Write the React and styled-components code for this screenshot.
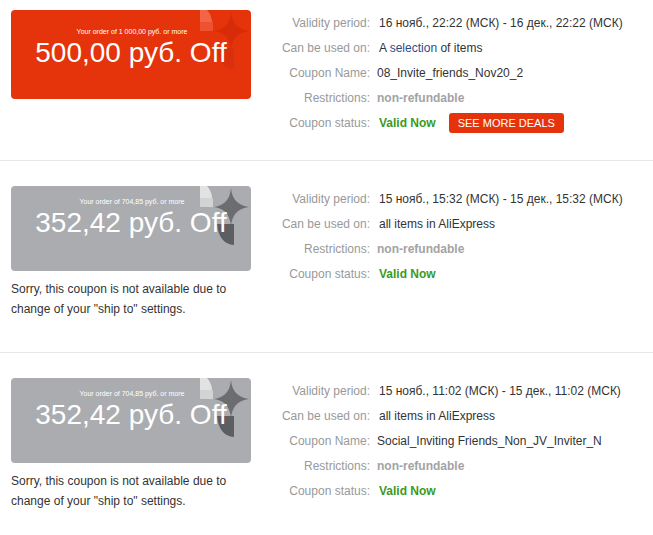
import styled, { createGlobalStyle } from 'styled-components';

const GlobalStyle = createGlobalStyle`
  body {
    margin: 0;
    background: #fff;
    font-family: "Liberation Sans", Arial, sans-serif;
  }
`;

const coupons = [
  {
    active: true,
    order: 'Your order of 1 000,00 руб. or more',
    amount: '500,00 руб. Off',
    period: '16 нояб., 22:22 (МСК) - 16 дек., 22:22 (МСК)',
    usedOn: 'selection',
    name: '08_Invite_friends_Nov20_2'
  },
  {
    active: false,
    order: 'Your order of 704,85 руб. or more',
    amount: '352,42 руб. Off',
    period: '15 нояб., 15:32 (МСК) - 15 дек., 15:32 (МСК)',
    usedOn: 'all'
  },
  {
    active: false,
    order: 'Your order of 704,85 руб. or more',
    amount: '352,42 руб. Off',
    period: '15 нояб., 11:02 (МСК) - 15 дек., 11:02 (МСК)',
    usedOn: 'all',
    name: 'Social_Inviting Friends_Non_JV_Inviter_N'
  }
];

const Decor = ({ active }) => {
  const leaf = active ? '#f26646' : '#e2e2e3';
  const leafLow = active ? '#ee5230' : '#d3d3d5';
  const star = active ? '#d82b0a' : '#6c6d70';
  const block = active ? '#d9300d' : '#5d5e61';
  return (
    <DecorSvg width="56" height="62" viewBox="0 0 56 62">
      <path d="M5 0 H12 Q18 6 18 21 H5 Z" fill={leaf} />
      <path d="M5 12 H17.5 Q18 16 18 21 H5 Z" fill={leafLow} />
      <path d="M22 38 H39 V59 Q24 58 22 38 Z" fill={block} />
      <path d="M36 2 Q37.5 19 54 21 Q37.5 23 36 40 Q34.5 23 19 21 Q34.5 19 36 2 Z" fill={star} />
    </DecorSvg>
  );
};

const Coupon = ({ coupon, first }) => (
  <Section $first={first}>
    <LeftCol>
      <Card $active={coupon.active}>
        <Decor active={coupon.active} />
        <OrderText>{coupon.order}</OrderText>
        <Amount>{coupon.amount}</Amount>
      </Card>
      {!coupon.active && (
        <Sorry>
          Sorry, this coupon is not available due to
          <br />
          change of your "ship to" settings.
        </Sorry>
      )}
    </LeftCol>
    <Info>
      <Row>
        <Label>Validity period:</Label>
        <Value>{coupon.period}</Value>
      </Row>
      <Row>
        <Label>Can be used on:</Label>
        {coupon.usedOn === 'selection' ? (
          <Value>
            A <Link>selection</Link> of items
          </Value>
        ) : (
          <Value>all items in AliExpress</Value>
        )}
      </Row>
      {coupon.name && (
        <Row>
          <Label>Coupon Name:</Label>
          <Value $tight>{coupon.name}</Value>
        </Row>
      )}
      <Row>
        <Label>Restrictions:</Label>
        <Muted>non-refundable</Muted>
      </Row>
      <Row>
        <Label>Coupon status:</Label>
        <Status>Valid Now</Status>
        {coupon.active && <DealsButton>SEE MORE DEALS</DealsButton>}
      </Row>
    </Info>
  </Section>
);

const App = () => (
  <>
    <GlobalStyle />
    <Page>
      {coupons.map((c, i) => (
        <Coupon key={i} coupon={c} first={i === 0} />
      ))}
    </Page>
  </>
);

const Page = styled.div`
  width: 653px;
`;

const Section = styled.div`
  display: flex;
  align-items: flex-start;
  padding: ${(p) => (p.$first ? '10px' : '25px')} 0 25px 11px;
  border-bottom: 1px solid #e6e6e6;

  &:last-child {
    border-bottom: none;
  }
`;

const LeftCol = styled.div`
  width: 240px;
  flex-shrink: 0;
`;

const Card = styled.div`
  position: relative;
  height: ${(p) => (p.$active ? '89px' : '85px')};
  padding-top: ${(p) => (p.$active ? '17px' : '11px')};
  box-sizing: border-box;
  border-radius: 4px;
  overflow: hidden;
  background: ${(p) => (p.$active ? '#e5330b' : '#abacaf')};
  color: #fff;
  display: flex;
  flex-direction: column;
  align-items: center;
`;

const DecorSvg = styled.svg`
  position: absolute;
  top: 0;
  right: 0;
`;

const OrderText = styled.div`
  position: relative;
  font-size: 7px;
  line-height: 10px;
  margin-left: 2px;
`;

const Amount = styled.div`
  position: relative;
  font-size: 28px;
  line-height: 30px;
  margin-top: 1px;
  white-space: nowrap;
`;

const Sorry = styled.div`
  margin: 9px 0 8px;
  font-size: 12px;
  line-height: 19.5px;
  color: #333;
`;

const Info = styled.div`
  margin-left: 19px;
  display: flex;
  flex-direction: column;
`;

const Row = styled.div`
  display: flex;
  align-items: center;
  height: 25px;
  font-size: 12px;
  white-space: nowrap;
`;

const Label = styled.div`
  width: 100px;
  text-align: right;
  color: #999;
`;

const Value = styled.div`
  margin-left: ${(p) => (p.$tight ? '7px' : '9px')};
  color: #333;
`;

const Link = styled.span`
  color: #2a4b8d;
`;

const Muted = styled.div`
  margin-left: 7px;
  color: #a3a3a3;
  font-weight: bold;
`;

const Status = styled.div`
  margin-left: 9px;
  color: #3a9a1e;
  font-weight: bold;
`;

const DealsButton = styled.button`
  margin-left: 13px;
  height: 20px;
  padding: 0 9px;
  border: none;
  border-radius: 3px;
  background: #e5330b;
  color: #fff;
  font-family: "Liberation Sans", Arial, sans-serif;
  font-size: 11px;
  line-height: 20px;
  cursor: pointer;
`;

export default App;
